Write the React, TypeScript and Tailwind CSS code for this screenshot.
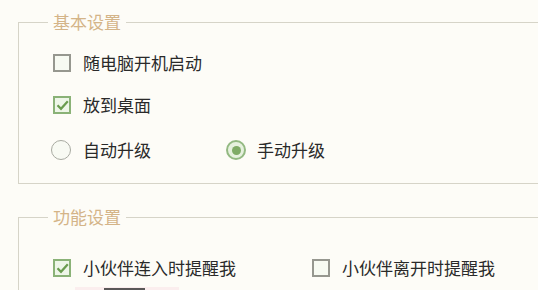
import React from "react";

const font = { fontFamily: '"Noto Sans CJK SC", "Noto Sans", sans-serif' };

function Check({ checked }: { checked?: boolean }) {
  return checked ? (
    <span className="flex h-[18px] w-[18px] shrink-0 items-center justify-center border-2 border-[#8ab277] bg-[#eef6e8]">
      <svg width="13" height="11" viewBox="0 0 13 11">
        <path d="M1.5 5.2 L5 8.8 L11.8 1.2" fill="none" stroke="#6a9c4f" strokeWidth="2.2" />
      </svg>
    </span>
  ) : (
    <span className="h-[18px] w-[18px] shrink-0 border-2 border-[#96978f] bg-[#f7faf2]" />
  );
}

function Radio({ checked }: { checked?: boolean }) {
  return checked ? (
    <span className="flex h-[20px] w-[20px] shrink-0 items-center justify-center rounded-full border-2 border-[#93b982] bg-[#e6f1de]">
      <span className="h-[9px] w-[9px] rounded-full bg-[#7fab66]" />
    </span>
  ) : (
    <span className="h-[20px] w-[20px] shrink-0 rounded-full border-[1.5px] border-[#a8aaa1] bg-[#f8faf3]" />
  );
}

export default function App() {
  return (
    <div
      className="h-[290px] w-[538px] overflow-hidden bg-[#fdfcf7] pl-[18px] pt-[10px] text-[17px] leading-[24px] text-[#2a2a2a]"
      style={font}
    >
      <fieldset className="w-[560px] border border-[#d6d4c8] pb-[21px] pl-[34px] pt-[17px]">
        <legend className="-ml-[5px] px-[5px] text-[#d4b488]">基本设置</legend>
        <div className="flex h-[24px] items-center gap-[12px]">
          <Check />
          <span>随电脑开机启动</span>
        </div>
        <div className="mt-[18px] flex h-[24px] items-center gap-[12px]">
          <Check checked />
          <span>放到桌面</span>
        </div>
        <div className="-ml-[2px] mt-[21px] flex h-[24px] items-center">
          <div className="flex w-[175px] items-center gap-[12px]">
            <Radio />
            <span>自动升级</span>
          </div>
          <div className="flex items-center gap-[11px]">
            <Radio checked />
            <span>手动升级</span>
          </div>
        </div>
      </fieldset>

      <fieldset className="mt-[21px] w-[560px] border border-[#d6d4c8] pb-[21px] pl-[34px] pt-[27px]">
        <legend className="-ml-[5px] px-[5px] text-[#d4b488]">功能设置</legend>
        <div className="flex h-[24px] items-center">
          <div className="flex w-[259px] items-center gap-[12px]">
            <Check checked />
            <span>小伙伴连入时提醒我</span>
          </div>
          <div className="flex items-center gap-[12px]">
            <Check />
            <span>小伙伴离开时提醒我</span>
          </div>
        </div>
        <div className="ml-[22px] mt-[7px] flex h-[20px] w-[104px] items-start bg-[#fbeeee]">
          <div className="ml-[29px] mt-[1px] h-[20px] w-[41px] bg-[#5a5858]" />
        </div>
      </fieldset>
    </div>
  );
}
